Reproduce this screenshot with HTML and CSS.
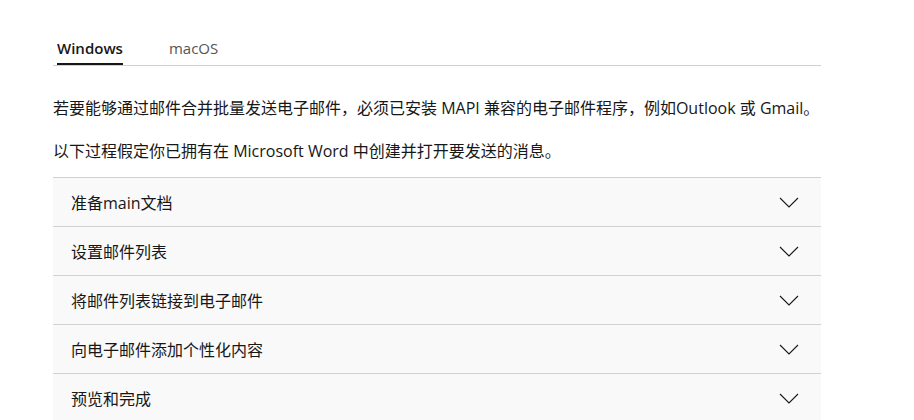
FILE: index.html
```html
<!DOCTYPE html>
<html>
<head>
	<meta charset="utf-8">
	<link rel="stylesheet" href="styles.css">
</head>
<body>
    <div id="content">
        <div class="tabs">
            <a href="#" class="tab active">Windows</a><a href="#" class="tab">macOS</a>
        </div>
        <p class="intro">若要能够通过邮件合并批量发送电子邮件，必须已安装 MAPI 兼容的电子邮件程序，例如Outlook 或 Gmail。</p>
        <p class="last">以下过程假定你已拥有在 Microsoft Word 中创建并打开要发送的消息。</p>

        <div class="accordion">
            <div class="item"><span>准备main文档</span><svg class="chevron" width="20" height="11" viewBox="0 0 20 11"><polyline points="1,1 10,10 19,1"/></svg></div>
            <div class="item"><span>设置邮件列表</span><svg class="chevron" width="20" height="11" viewBox="0 0 20 11"><polyline points="1,1 10,10 19,1"/></svg></div>
            <div class="item"><span>将邮件列表链接到电子邮件</span><svg class="chevron" width="20" height="11" viewBox="0 0 20 11"><polyline points="1,1 10,10 19,1"/></svg></div>
            <div class="item"><span>向电子邮件添加个性化内容</span><svg class="chevron" width="20" height="11" viewBox="0 0 20 11"><polyline points="1,1 10,10 19,1"/></svg></div>
            <div class="item"><span>预览和完成</span><svg class="chevron" width="20" height="11" viewBox="0 0 20 11"><polyline points="1,1 10,10 19,1"/></svg></div>
        </div>
    </div>
</body>
</html>
```

FILE: styles.css
```css
body {
	margin: 0;
	background: #fff;
	color: #171717;
	font-family: "Open Sans", "Noto Sans CJK SC", sans-serif;
	font-size: 16px;
}
a { text-decoration: none; }
#content {
	width: 768px;
	margin: 0 0 0 53px;
}
.tabs {
	margin-top: 38px;
	padding-left: 4px;
	border-bottom: 1px solid #d1d1d1;
	display: flex;
	gap: 46px;
}
.tab {
	font-size: 15px;
	line-height: 20px;
	padding-bottom: 5px;
	color: #555;
	border-bottom: 2px solid transparent;
}
.tab.active {
	color: #171717;
	font-weight: 600;
	border-bottom-color: #171717;
}
p {
	margin: 0 0 16px 0;
	line-height: 27px;
}
.intro { margin-top: 29px; }
.last { margin-bottom: 12px; }
.item {
	height: 48px;
	border-top: 1px solid #d1d1d1;
	background: #f9f9f9;
	display: flex;
	align-items: center;
	justify-content: space-between;
	padding: 0 22px 0 18px;
}
.chevron polyline {
	fill: none;
	stroke: #171717;
	stroke-width: 1.1;
}
```
